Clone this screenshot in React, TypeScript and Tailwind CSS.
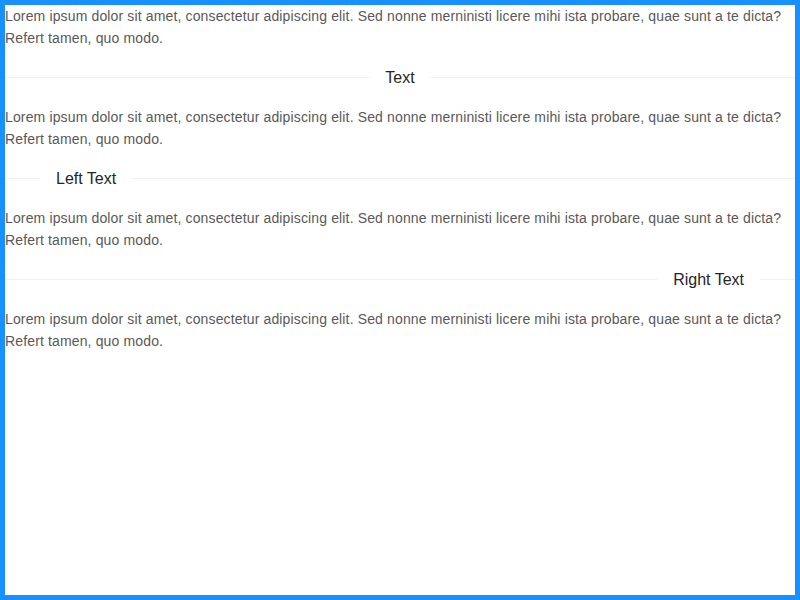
import React from 'react';

const lorem =
  'Lorem ipsum dolor sit amet, consectetur adipiscing elit. Sed nonne merninisti licere mihi ista probare, quae sunt a te dicta? Refert tamen, quo modo.';

function Para() {
  return <p className="text-[14px] leading-[1.5715] tracking-[0.14px] text-[#595959]">{lorem}</p>;
}

function Divider({ text, align }: { text: string; align: 'center' | 'left' | 'right' }) {
  const before = align === 'left' ? 'w-[35px]' : 'flex-1';
  const after = align === 'right' ? 'w-[35px]' : 'flex-1';
  return (
    <div className="flex items-center my-4">
      <div className={`${before} border-t border-[#f0f0f0]`} />
      <span className="px-4 text-[16px] leading-[1.5715] text-[#262626] whitespace-nowrap">{text}</span>
      <div className={`${after} border-t border-[#f0f0f0]`} />
    </div>
  );
}

export default function App() {
  return (
    <div
      className="w-[800px] h-[600px] border-[5px] border-[#1890ff] bg-white overflow-hidden"
      style={{ fontFamily: '"Liberation Sans", Arial, sans-serif' }}
    >
      <Para />
      <Divider text="Text" align="center" />
      <Para />
      <Divider text="Left Text" align="left" />
      <Para />
      <Divider text="Right Text" align="right" />
      <Para />
    </div>
  );
}
